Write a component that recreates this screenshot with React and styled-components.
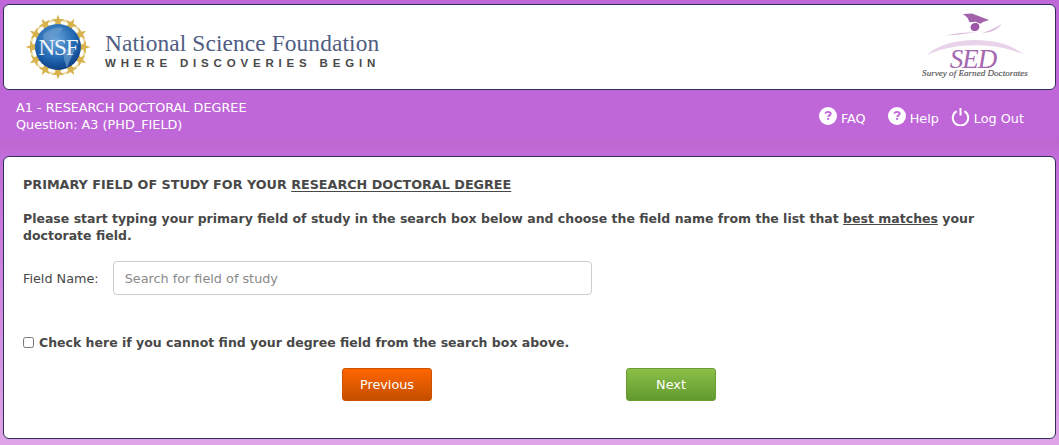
import styled, { createGlobalStyle } from "styled-components";

const Global = createGlobalStyle`
  html, body { margin: 0; padding: 0; }
  body {
    height: 445px;
    overflow: hidden;
    background: linear-gradient(#bf66d8 0, #bf66d8 138px, #bb67d0 139px, #c26cd9 156px, #dda3e6 440px);
    font-family: "DejaVu Sans", sans-serif;
    color: #484848;
  }
`;

const Page = styled.div`
  padding: 4px 3px 0;
`;

const Card = styled.div`
  background: #fff;
  border: 1px solid #2e2f58;
  border-radius: 6px;
`;

const Banner = styled(Card)`
  height: 84px;
  display: flex;
  align-items: center;
  justify-content: space-between;
  padding: 0 25px 0 21px;
`;

const Brand = styled.div`
  display: flex;
  align-items: center;
  gap: 14px;
`;

const BrandText = styled.div`
  display: flex;
  flex-direction: column;
  margin-top: 5px;
`;

const BrandName = styled.div`
  font-family: "Liberation Serif", serif;
  font-size: 23.4px;
  line-height: 26px;
  color: #4f5d82;
  letter-spacing: 0.1px;
`;

const BrandTag = styled.div`
  font-family: "Liberation Sans", sans-serif;
  font-weight: 700;
  font-size: 11.5px;
  line-height: 14px;
  letter-spacing: 4.82px;
  color: #4a4a4a;
`;

const StatusBar = styled.div`
  height: 48px;
  display: flex;
  justify-content: space-between;
  padding: 9px 32px 0 13px;
  box-sizing: border-box;
  color: #fff;
  font-size: 12.8px;
  line-height: 17px;
`;

const NavLinks = styled.nav`
  display: flex;
  align-items: flex-start;
  padding-top: 7px;
`;

const NavLink = styled.a`
  display: flex;
  align-items: flex-start;
  gap: 4px;
  margin-left: ${(p) => p.$gap}px;
  svg { flex: none; margin-top: 1px; }
  span { margin-top: 4px; }
`;

const Main = styled(Card)`
  margin-top: 18px;
  height: 283px;
  box-sizing: border-box;
  padding: 19px 19px 0;
  font-size: 12.8px;
  line-height: 17px;
`;

const Heading = styled.div`
  font-weight: 700;
  font-size: 12.75px;
  u { text-underline-offset: 2px; }
`;

const Intro = styled.div`
  font-weight: 700;
  font-size: 12.5px;
  margin-top: 17px;
  width: 970px;
`;

const FieldRow = styled.div`
  display: flex;
  align-items: center;
  gap: 14px;
  margin-top: 17px;
`;

const FieldLabel = styled.label`
  font-size: 12.8px;
`;

const SearchInput = styled.input`
  width: 479px;
  height: 34px;
  box-sizing: border-box;
  border: 1px solid #ccc;
  border-radius: 4px;
  padding: 0 11px;
  font: inherit;
  &::placeholder { color: #8a8a8a; opacity: 1; }
`;

const CheckRow = styled.label`
  display: flex;
  align-items: center;
  gap: 5px;
  margin-top: 39px;
  font-weight: 700;
  font-size: 12.5px;
  input { margin: 0; width: 11px; height: 11px; }
`;

const Actions = styled.div`
  display: flex;
  gap: 194px;
  margin: 17px 0 0 319px;
`;

const NavButton = styled.button`
  width: 90px;
  height: 33px;
  border-radius: 3px;
  font: inherit;
  color: #fff;
  border: 1px solid ${(p) => (p.$kind === "next" ? "#6d9c36" : "#cc5200")};
  background: ${(p) =>
    p.$kind === "next"
      ? "linear-gradient(#8abf48, #639a2f)"
      : "linear-gradient(#ff6600, #c44f00)"};
`;

const HelpIcon = () => (
  <svg width="18" height="18" viewBox="0 0 18 18">
    <circle cx="9" cy="9" r="9" fill="#fff" />
    <path d="M6.200 6.600c.5-1.200 1.600-1.700 2.900-1.700 1.500 0 2.600.7 2.600 1.900 0 1.600-2.400 1.600-2.500 3.100" fill="none" stroke="#bf66d8" strokeWidth="1.900" />
    <rect x="8.200" y="11" width="1.900" height="1.900" fill="#bf66d8" />
  </svg>
);

const PowerIcon = () => (
  <svg width="19" height="19" viewBox="0 0 19 19" fill="none" stroke="#fff" strokeWidth="2">
    <path d="M5.600 4.200a7.700 7.700 0 1 0 7.800 0" />
    <path d="M9.500 1v7.500" />
  </svg>
);

const NsfLogo = () => (
  <svg width="66" height="66" viewBox="0 0 66 66">
    <defs>
      <radialGradient id="globe" cx="0.45" cy="0.35" r="0.75">
        <stop offset="0" stopColor="#6aa6dc" />
        <stop offset="0.6" stopColor="#1c62ae" />
        <stop offset="1" stopColor="#0b2f70" />
      </radialGradient>
    </defs>
    <circle cx="33" cy="33" r="27" fill="none" stroke="#e8d9a4" strokeWidth="2" />
    {Array.from({ length: 12 }).map((_, i) => (
      <path
        key={i}
        d="M33 .5l1.600 4.600 4.800.1-3.900 2.900 1.400 4.600-3.900-2.700-3.900 2.700 1.400-4.600-3.900-2.900 4.800-.1z"
        fill="#d8b24c"
        transform={`rotate(${i * 30} 33 33)`}
      />
    ))}
    <circle cx="33" cy="33" r="23" fill="url(#globe)" />
    <path d="M18 21c6-6 14-8 20-7l-3 5-6 2 1 6-6 2-5-3zM38 36l9-3 3 3-5 10-3 8-3-9z" fill="#6b9dcc" opacity="0.7" />
    <text x="33" y="41" textAnchor="middle" fontFamily="Liberation Serif, serif" fontSize="23" fill="#f2f5fa" letterSpacing="-1">NSF</text>
  </svg>
);

const SedLogo = () => (
  <svg width="108" height="68" viewBox="0 0 108 68">
    <path d="M41 1l9-.5 17 6.500-6 2-2.500 1.800-5-2-6 .5-2-4.500z" fill="#a263ab" />
    <ellipse cx="53" cy="14" rx="4.500" ry="4" fill="#9f57a7" transform="rotate(-25 53 14)" />
    <path d="M24 22.500c9-2.500 20-3.500 30-3-10 1-20 2.500-30 3zM60 20c8-2.500 15-6 20-9-4 5-11 9-20 9z" fill="#dcb9de" />
    <path d="M5 42c20-20 76-20 97 0-26-13-70-13-97 0z" fill="#e8d3ea" />
    <text x="51" y="55" textAnchor="middle" fontFamily="Liberation Serif, serif" fontStyle="italic" fontSize="27" letterSpacing="-1" fill="#a468b1">SED</text>
    <text x="53" y="63" textAnchor="middle" fontFamily="Liberation Serif, serif" fontStyle="italic" fontSize="9.100" fill="#555" stroke="#555" strokeWidth="0.150">Survey of Earned Doctorates</text>
  </svg>
);

export default function App() {
  return (
    <>
      <Global />
      <Page>
        <Banner>
          <Brand>
            <NsfLogo />
            <BrandText>
              <BrandName>National Science Foundation</BrandName>
              <BrandTag>WHERE DISCOVERIES BEGIN</BrandTag>
            </BrandText>
          </Brand>
          <SedLogo />
        </Banner>
        <StatusBar>
          <div>
            A1 - RESEARCH DOCTORAL DEGREE
            <br />
            Question: A3 (PHD_FIELD)
          </div>
          <NavLinks>
            <NavLink>
              <HelpIcon />
              <span>FAQ</span>
            </NavLink>
            <NavLink $gap={22}>
              <HelpIcon />
              <span>Help</span>
            </NavLink>
            <NavLink $gap={12}>
              <PowerIcon />
              <span>Log Out</span>
            </NavLink>
          </NavLinks>
        </StatusBar>
        <Main>
          <Heading>
            PRIMARY FIELD OF STUDY FOR YOUR <u>RESEARCH DOCTORAL DEGREE</u>
          </Heading>
          <Intro>
            Please start typing your primary field of study in the search box below and choose the field name from the list that <u>best matches</u> your doctorate field.
          </Intro>
          <FieldRow>
            <FieldLabel>Field Name:</FieldLabel>
            <SearchInput placeholder="Search for field of study" />
          </FieldRow>
          <CheckRow>
            <input type="checkbox" />
            Check here if you cannot find your degree field from the search box above.
          </CheckRow>
          <Actions>
            <NavButton>Previous</NavButton>
            <NavButton $kind="next">Next</NavButton>
          </Actions>
        </Main>
      </Page>
    </>
  );
}
